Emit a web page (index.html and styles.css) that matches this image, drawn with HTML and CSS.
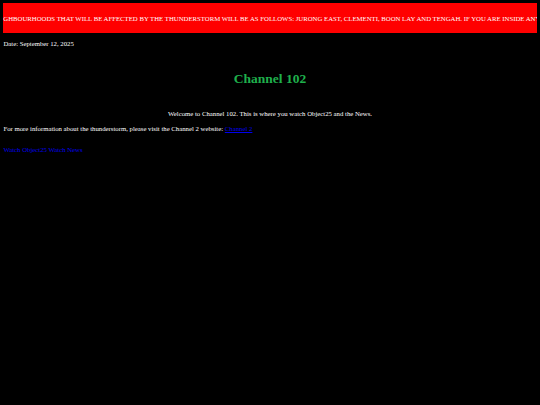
FILE: index.html
```html
<!DOCTYPE html>
<html lang="en">
<head>
<meta charset="utf-8">
<title>Channel 102</title>
<link rel="stylesheet" href="styles.css">
</head>
<body>
<div class="alert">
  <div class="alert-track">NEIGHBOURHOODS THAT WILL BE AFFECTED BY THE THUNDERSTORM WILL BE AS FOLLOWS: JURONG EAST, CLEMENTI, BOON LAY AND TENGAH. IF YOU ARE INSIDE ANY OF THESE NEIGHBOURHOODS, PLEASE STAY INDOORS.</div>
</div>
<p class="date">Date: September 12, 2025</p>
<h1 class="title">Channel 102</h1>
<p class="welcome">Welcome to Channel 102. This is where you watch Object25 and the News.</p>
<p class="info">For more information about the thunderstorm, please visit the Channel 2 website: <a href="#">Channel 2</a></p>
<p class="nav"><a href="#">Watch Object25</a> <a href="#">Watch News</a></p>
</body>
</html>
```

FILE: styles.css
```css
html {
  background: #000;
  overflow: hidden;
}
body {
  margin: 3.4px;
  background: #000;
  color: #fff;
  font-family: "Liberation Serif", "Times New Roman", serif;
  font-size: 6.75px;
}
.alert {
  background: #ff0000;
  height: 29.5px;
  width: calc(100% + 10px);
  overflow: hidden;
  display: flex;
  align-items: center;
}
.alert-track {
  white-space: nowrap;
  color: #fff;
  margin-left: -11.3px;
}
.date {
  margin: 6.75px 0 0;
}
.title {
  color: #1fb04c;
  font-size: 13.5px;
  text-align: center;
  margin: 24px 0 0;
}
.welcome {
  text-align: center;
  margin: 23.3px 0 0;
}
.info {
  margin: 7.6px 0 0;
}
.nav {
  margin: 14.5px 0 0;
}
a {
  color: #0000ee;
}
```
